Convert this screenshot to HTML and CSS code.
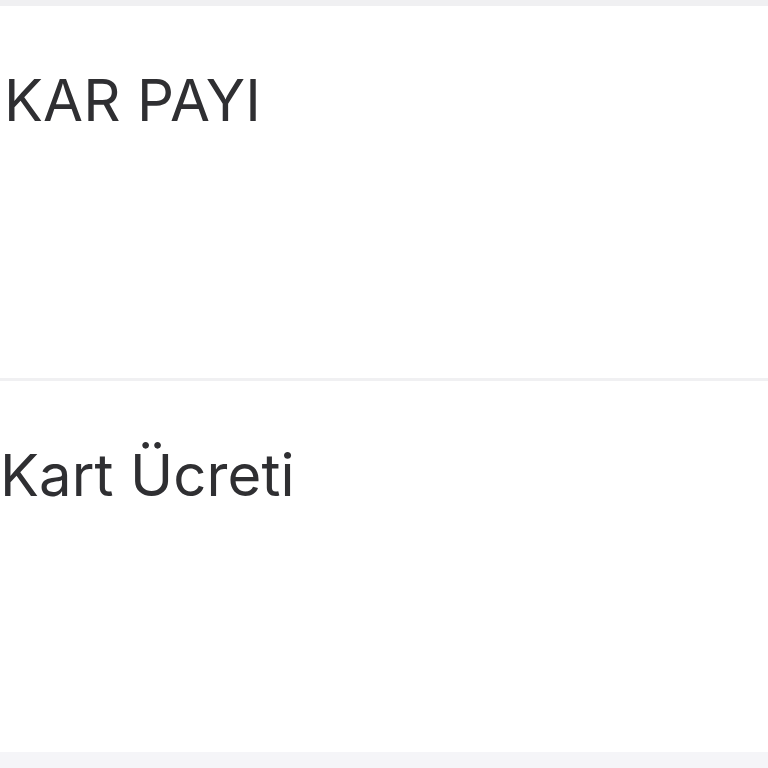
FILE: index.html
```html
<!DOCTYPE html>
<html lang="tr">
<head>
<meta charset="utf-8">
<title>Ücretler</title>
<link rel="stylesheet" href="styles.css">
</head>
<body>
<div class="list">
  <div class="row row-first"><span class="label">KAR PAYI</span></div>
  <div class="row row-second"><span class="label">Kart Ücreti</span></div>
</div>
</body>
</html>
```
FILE: styles.css
```css
html, body {
  margin: 0;
  padding: 0;
  background: #f5f5f8;
  height: 768px;
  overflow: hidden;
}

.list {
  display: flex;
  flex-direction: column;
  padding-top: 6px;
  gap: 3px;
  background: #f0f0f2;
}

.row {
  height: 372px;
  background: #fff;
  box-sizing: border-box;
  padding-top: 59px;
}

.row-first { padding-left: 4px; height: 372px; }
.row-second { padding-left: 0; height: 371px; }

.label {
  display: block;
  font-family: "Inter", "Open Sans", sans-serif;
  font-size: 58px;
  line-height: 70px;
  color: #2f2f32;
  letter-spacing: 0.1px;
}
```
